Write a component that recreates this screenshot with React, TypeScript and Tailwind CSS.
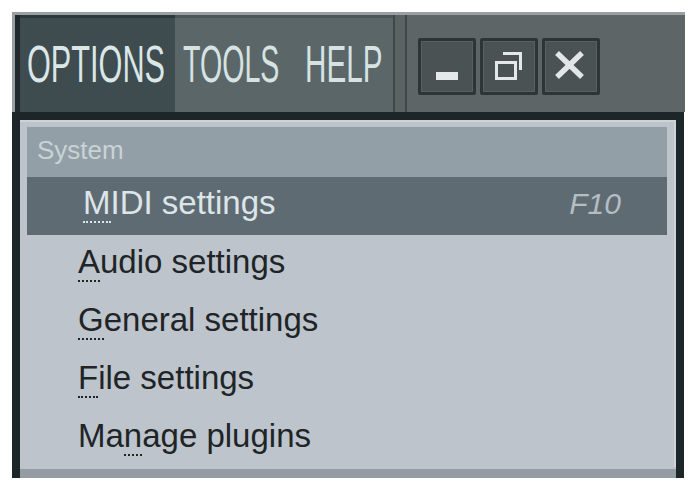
import React from 'react';

const barFont = { fontFamily: '"Liberation Sans", Arial, sans-serif' };

const Mn: React.FC<{ children: React.ReactNode }> = ({ children }) => (
  <span className="border-b-[2px] border-dotted border-current">{children}</span>
);

const WinButton: React.FC<{ children: React.ReactNode }> = ({ children }) => (
  <div className="w-[58px] h-[57px] border-[3px] border-[#2e3537] bg-[#4a5254] rounded-[2px] shadow-[inset_0_0_0_1px_#566062]">
    <svg width="52" height="51" viewBox="0 0 52 51" className="block">
      {children}
    </svg>
  </div>
);

const TopBar: React.FC = () => (
  <div className="h-[100px] flex border-t-[3px] border-l-[3px] border-[#9aa0a1] bg-[#5e6567]" style={barFont}>
    <div className="w-[5px] bg-[#1f292c]" />
    <div className="w-[155px] bg-[#3e4b4f] border-t-[3px] border-[#2c383b] pt-[20px] pl-[7px] overflow-hidden">
      <span className="inline-block origin-left scale-x-[0.59] text-[52px] leading-none text-[#dbe6e6] whitespace-nowrap">OPTIONS</span>
    </div>
    <div className="w-[218px] flex bg-[#5a6668] border-t-[3px] border-[#4c5658] pt-[20px] overflow-hidden">
      <div className="w-[130px] pl-[8px]">
        <span className="inline-block origin-left scale-x-[0.55] text-[52px] leading-none text-[#d7e2e2] whitespace-nowrap">TOOLS</span>
      </div>
      <div className="pl-0">
        <span className="inline-block origin-left scale-x-[0.57] text-[52px] leading-none text-[#d7e2e2] whitespace-nowrap">HELP</span>
      </div>
    </div>
    <div className="w-[14px] bg-[#5a6264] border-x-2 border-[#3f4749]" />
    <div className="flex-1 flex gap-[4px] pl-[11px] pt-[23px]">
      <WinButton>
        <rect x="15" y="31" width="22" height="8" fill="#e4e8e9" />
      </WinButton>
      <WinButton>
        <path d="M20 12.5 H37.5 V29" fill="none" stroke="#e4e8e9" strokeWidth="3" />
        <rect x="13.5" y="21.5" width="19" height="16" fill="none" stroke="#e4e8e9" strokeWidth="3" />
      </WinButton>
      <WinButton>
        <path d="M12 12 L37 36 M37 12 L12 36" stroke="#e2e6e8" strokeWidth="5.5" />
      </WinButton>
    </div>
  </div>
);

const Menu: React.FC = () => {
  const items: { pre: string; key: string; post: string }[] = [
    { pre: '', key: 'A', post: 'udio settings' },
    { pre: '', key: 'G', post: 'eneral settings' },
    { pre: '', key: 'F', post: 'ile settings' },
    { pre: 'Ma', key: 'n', post: 'age plugins' },
  ];
  return (
    <div
      className="w-[672px] h-[366px] flex flex-col border-t-[8px] border-x-[8px] border-[#1c2528] bg-[#bdc4cb]"
      style={barFont}
    >
      <div className="flex-1 flex flex-col pt-[5px] px-[7px] border-t-[2px] border-r-[2px] border-[#cdd3d7]">
        <div className="h-[50px] flex items-center pl-[10px] pb-[4px] bg-[#939fa6] text-[26px] text-[#c9d2d6]">
          System
        </div>
        <div className="h-[58px] flex items-center justify-between pl-[56px] pr-[46px] pb-[6px] bg-[#5f6b72]">
          <span className="text-[33px] text-[#dde5e9] whitespace-nowrap">
            <Mn>M</Mn>IDI settings
          </span>
          <span className="text-[30px] italic text-[#b3bdc3]">F10</span>
        </div>
        {items.map((it, i) => (
          <div key={i} className="h-[58px] flex items-center pl-[51px] pb-[4px] text-[33px] text-[#202427] whitespace-nowrap">
            <span>
              {it.pre}
              <Mn>{it.key}</Mn>
              {it.post}
            </span>
          </div>
        ))}
      </div>
      <div className="h-[11px] mt-[2px] bg-[#949ba3]" />
    </div>
  );
};

export default function App() {
  return (
    <div className="w-[694px] h-[492px] bg-white pl-3 pt-3 overflow-hidden">
      <div className="w-[673px]">
        <TopBar />
        <Menu />
      </div>
    </div>
  );
}
